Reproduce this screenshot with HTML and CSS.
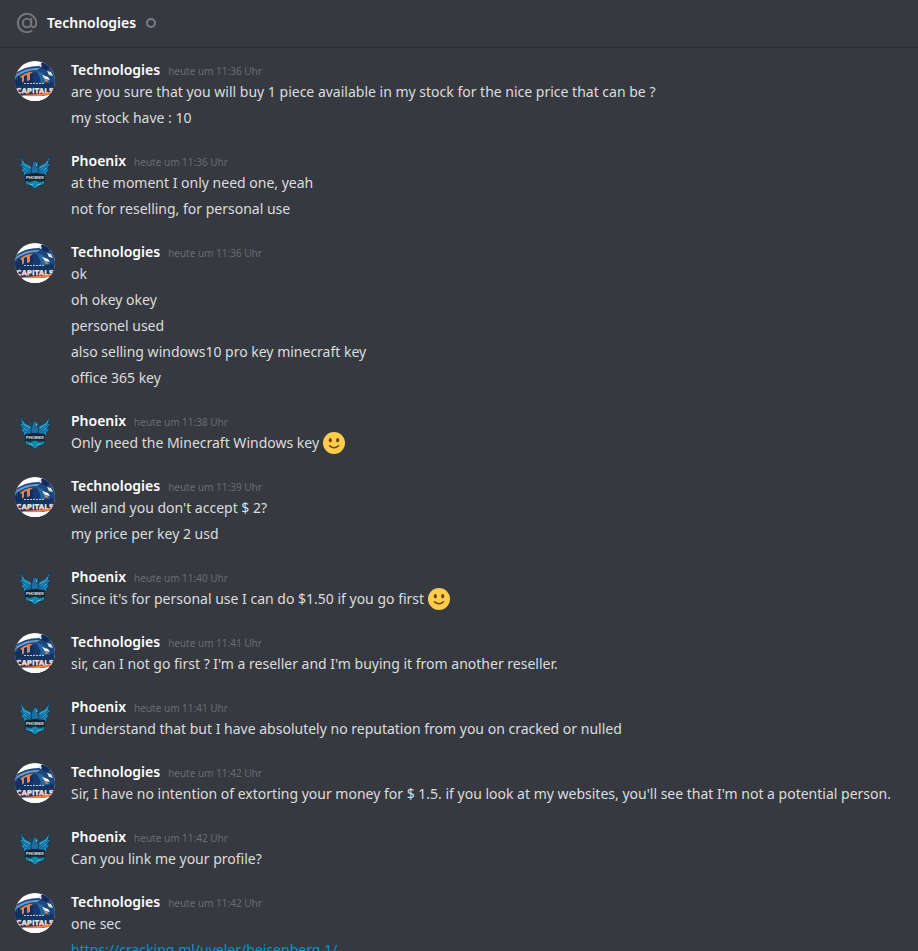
FILE: index.html
```html
<!DOCTYPE html>
<html lang="en">
<head>
<meta charset="utf-8">
<meta name="viewport" content="width=device-width, initial-scale=1">
<title>Technologies</title>
<link rel="stylesheet" href="styles.css">
</head>
<body>
<svg class="sprites" aria-hidden="true">
  <defs>
    <clipPath id="disc"><circle cx="20" cy="20" r="20"/></clipPath>
    <symbol id="capitals" viewBox="0 0 40 40">
      <g clip-path="url(#disc)">
        <rect width="40" height="40" fill="#fff"/>
        <path d="M0 13Q9 5 24 5L31 2L40 9V27H0z" fill="#1d467d"/>
        <path d="M2 13Q12 6 25 7L22 9Q10 9 0 17z" fill="#6f9cc6"/>
        <path d="M1 20Q10 9 22 11L20 16L17 26H1z" fill="#ef8243"/>
        <path d="M0 27V19L3 18V15L7 17V22L9 20V15L12 14V20L15 19V13L18 11V22L24 24V27z" fill="#12305f"/>
        <path d="M19 10Q28 9 33 18L38 26H20L24 19z" fill="#2866a0"/>
        <path d="M18 10L22 11L26 19L24 23L18 21z" fill="#173a70"/>
        <path d="M22 4L27 2L29 4L26 6zM32 10L36 11L38 15L34 14z" fill="#dce7f1"/>
        <path d="M27 14L33 16L35 19L30 18z" fill="#f4f6f8"/>
        <path d="M26 2L31 1L35 7L31 9L27 7z" fill="#102c5c"/>
        <path d="M29 18L34 20L31 21z" fill="#f08445"/>
        <path d="M1 25L39 21L40 33L29 35H8L2 34z" fill="#163561"/>
        <path d="M9 22.500h2m1 0h2m1 0h2m1 0h2m1 0h2m1 0h2m1 0h2" stroke="#b9cadb" stroke-width="1"/>
        <text x="20" y="33" class="capitals-text capitals-shade">CAPITALS</text>
        <text x="20" y="32" class="capitals-text">CAPITALS</text>
        <path d="M7 34Q22 34 36 31L34 34Q20 36 8 35z" fill="#ef8243"/>
        <path d="M5 35Q20 37 35 34L28 40H12z" fill="#fff"/>
      </g>
    </symbol>
    <symbol id="phoenix" viewBox="0 0 40 40">
      <path id="wing" d="M5 4L10 11L16 14L19 20L19 28L14 26L10 26L11 24L7 22L9 21L5 17L8 17L4 11L7 12z" fill="#1c86be" stroke="#123a50" stroke-width=".8"/>
      <path id="feathers" d="M7 8L11 14L17 19M7 13L12 18L18 22M9 18L13 21L18 24" fill="none" stroke="#114766" stroke-width=".8"/>
      <path id="glint" d="M7 9L10 13L15 16M9 16L12 19" fill="none" stroke="#3cc4e4" stroke-width=".8"/>
      <use href="#wing" transform="matrix(-1 0 0 1 40 0)"/>
      <use href="#feathers" transform="matrix(-1 0 0 1 40 0)"/>
      <use href="#glint" transform="matrix(-1 0 0 1 40 0)"/>
      <path d="M17 14L18 10L21 9L24 11L22 13L24 18L22 23H17L16 18z" fill="#1d6da1" stroke="#12364d" stroke-width=".8"/>
      <path d="M21 12L23 13L21 14z" fill="#d5c777"/>
      <path d="M10 28L15 30L20 28L25 30L30 28L29 33L25 33L23 35L20 37L17 35L15 33L11 33z" fill="#1687ad" stroke="#103044" stroke-width=".8"/>
      <path d="M14 32L18 33M22 33L26 32" stroke="#4bc7d5" fill="none"/>
      <path d="M10 22L20 21L30 22V29L20 28L10 29z" fill="#17222f"/>
      <text x="20" y="27" class="phoenix-text">PHOENIX</text>
    </symbol>
    <symbol id="smile" viewBox="0 0 36 36">
      <circle cx="18" cy="18" r="18" fill="#ffcc4d"/>
      <ellipse cx="12" cy="13.5" rx="2.5" ry="3.5" fill="#664500"/>
      <ellipse cx="24" cy="13.5" rx="2.5" ry="3.5" fill="#664500"/>
      <path d="M10.5 22.5Q18 29 25.5 22.5" fill="none" stroke="#664500" stroke-width="2.4" stroke-linecap="round"/>
    </symbol>
  </defs>
</svg>
<header class="topbar">
  <svg class="at" viewBox="0 0 24 24" aria-hidden="true">
    <circle cx="12" cy="12" r="4.2"/>
    <path d="M16.2 7.8V14Q16.4 16.2 18.4 16.2Q21.2 16 21.2 12A9.2 9.2 0 1 0 16.6 20"/>
  </svg>
  <h1 class="title">Technologies</h1>
  <span class="status" role="img" aria-label="Offline"></span>
</header>
<main class="messages">
  <article class="group">
    <svg class="avatar"><use href="#capitals"/></svg>
    <div class="body">
      <h2 class="meta"><span class="name">Technologies</span><time class="time">heute um 11:36 Uhr</time></h2>
      <p>are you sure that you will buy 1 piece available in my stock for the nice price that can be ?</p>
      <p>my stock have : 10</p>
    </div>
  </article>
  <article class="group">
    <svg class="avatar"><use href="#phoenix"/></svg>
    <div class="body">
      <h2 class="meta"><span class="name">Phoenix</span><time class="time">heute um 11:36 Uhr</time></h2>
      <p>at the moment I only need one, yeah</p>
      <p>not for reselling, for personal use</p>
    </div>
  </article>
  <article class="group">
    <svg class="avatar"><use href="#capitals"/></svg>
    <div class="body">
      <h2 class="meta"><span class="name">Technologies</span><time class="time">heute um 11:36 Uhr</time></h2>
      <p>ok</p>
      <p>oh okey okey</p>
      <p>personel used</p>
      <p>also selling windows10 pro key minecraft key</p>
      <p>office 365 key</p>
    </div>
  </article>
  <article class="group">
    <svg class="avatar"><use href="#phoenix"/></svg>
    <div class="body">
      <h2 class="meta"><span class="name">Phoenix</span><time class="time">heute um 11:38 Uhr</time></h2>
      <p>Only need the Minecraft Windows key <svg class="emoji" role="img" aria-label="smile"><use href="#smile"/></svg></p>
    </div>
  </article>
  <article class="group">
    <svg class="avatar"><use href="#capitals"/></svg>
    <div class="body">
      <h2 class="meta"><span class="name">Technologies</span><time class="time">heute um 11:39 Uhr</time></h2>
      <p>well and you don't accept $ 2?</p>
      <p>my price per key 2 usd</p>
    </div>
  </article>
  <article class="group">
    <svg class="avatar"><use href="#phoenix"/></svg>
    <div class="body">
      <h2 class="meta"><span class="name">Phoenix</span><time class="time">heute um 11:40 Uhr</time></h2>
      <p>Since it's for personal use I can do $1.50 if you go first <svg class="emoji" role="img" aria-label="smile"><use href="#smile"/></svg></p>
    </div>
  </article>
  <article class="group">
    <svg class="avatar"><use href="#capitals"/></svg>
    <div class="body">
      <h2 class="meta"><span class="name">Technologies</span><time class="time">heute um 11:41 Uhr</time></h2>
      <p>sir, can I not go first ? I'm a reseller and I'm buying it from another reseller.</p>
    </div>
  </article>
  <article class="group">
    <svg class="avatar"><use href="#phoenix"/></svg>
    <div class="body">
      <h2 class="meta"><span class="name">Phoenix</span><time class="time">heute um 11:41 Uhr</time></h2>
      <p>I understand that but I have absolutely no reputation from you on cracked or nulled</p>
    </div>
  </article>
  <article class="group">
    <svg class="avatar"><use href="#capitals"/></svg>
    <div class="body">
      <h2 class="meta"><span class="name">Technologies</span><time class="time">heute um 11:42 Uhr</time></h2>
      <p>Sir, I have no intention of extorting your money for $ 1.5. if you look at my websites, you'll see that I'm not a potential person.</p>
    </div>
  </article>
  <article class="group">
    <svg class="avatar"><use href="#phoenix"/></svg>
    <div class="body">
      <h2 class="meta"><span class="name">Phoenix</span><time class="time">heute um 11:42 Uhr</time></h2>
      <p>Can you link me your profile?</p>
    </div>
  </article>
  <article class="group">
    <svg class="avatar"><use href="#capitals"/></svg>
    <div class="body">
      <h2 class="meta"><span class="name">Technologies</span><time class="time">heute um 11:42 Uhr</time></h2>
      <p>one sec</p>
      <p><a class="link" href="https://cracking.ml/uyeler/heisenberg.1/">https://cracking.ml/uyeler/heisenberg.1/</a></p>
    </div>
  </article>
</main>
</body>
</html>
```
FILE: styles.css
```css
* { box-sizing: border-box; }

body {
  margin: 0;
  height: 100vh;
  display: flex;
  flex-direction: column;
  background: #36393f;
  color: #dcddde;
  font-family: "Noto Sans", "Open Sans", sans-serif;
  font-size: 14px;
  line-height: 22px;
}

.sprites { position: absolute; width: 0; height: 0; }

.topbar {
  flex: none;
  display: flex;
  align-items: center;
  height: 48px;
  padding: 0 15px 2px;
  border-bottom: 1px solid #2b2e33;
  box-shadow: 0 1px 0 #33363b;
}

.at {
  width: 24px;
  height: 24px;
  margin-right: 8px;
  fill: none;
  stroke: #72767d;
  stroke-width: 2;
  stroke-linecap: round;
}

.title {
  margin: 0;
  color: #fff;
  font-size: 14px;
  font-weight: 600;
}

.status {
  width: 10px;
  height: 10px;
  margin-left: 10px;
  border: 2px solid #747f8d;
  border-radius: 50%;
}

.messages {
  flex: 1;
  min-height: 0;
  padding: 11px 15px 0;
  overflow-y: auto;
  scrollbar-width: none;
}

.group {
  display: flex;
  gap: 16px;
  margin-bottom: 21px;
}

.avatar {
  flex: none;
  width: 40px;
  height: 40px;
  margin-top: 2px;
}

.body { min-width: 0; }

.meta {
  display: flex;
  align-items: baseline;
  gap: 8px;
  margin: 0;
  font-size: 14px;
  font-weight: 600;
}

.name { color: #fff; }

.time {
  color: #696d74;
  font-size: 10px;
  font-weight: 400;
  line-height: 14px;
}

p { margin: 0; }
p + p { margin-top: 4px; }

.emoji {
  width: 22px;
  height: 22px;
  vertical-align: top;
}

.link { color: #0096cf; text-decoration: none; }

.capitals-text {
  fill: #e9e4ea;
  font: 700 7px "DejaVu Sans", "Liberation Sans", sans-serif;
  text-anchor: middle;
}

.capitals-shade { fill: #ef8243; }

.phoenix-text {
  fill: #e5edf1;
  font: 700 4px "Liberation Sans", sans-serif;
  text-anchor: middle;
}
```
